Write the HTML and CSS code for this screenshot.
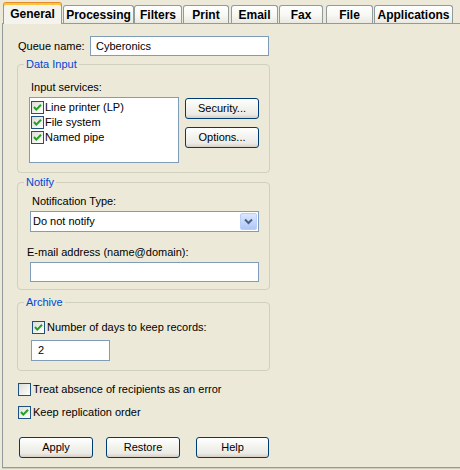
FILE: index.html
```html
<!DOCTYPE html>
<html>
<head>
<meta charset="utf-8">
<link rel="stylesheet" href="styles.css">
</head>
<body>
<div class="window">
  <div class="tabs">
    <div class="tab tab-general active">General</div>
    <div class="tab tab-processing">Processing</div>
    <div class="tab tab-filters">Filters</div>
    <div class="tab tab-print">Print</div>
    <div class="tab tab-email">Email</div>
    <div class="tab tab-fax">Fax</div>
    <div class="tab tab-file">File</div>
    <div class="tab tab-apps">Applications</div>
  </div>
  <div class="panel">
    <div class="queue-row">
      <span class="queue-label">Queue name:</span>
      <div class="textbox queue-input">Cyberonics</div>
    </div>

    <fieldset class="group group-data">
      <legend>Data Input</legend>
      <div class="body-data">
        <div class="caption services-caption">Input services:</div>
        <div class="services">
          <div class="listbox">
            <div class="item"><span class="cb"><svg viewBox="0 0 11 11" width="11" height="11"><polyline points="2,5 4.3,7.6 9,2.8" fill="none" stroke="#21a121" stroke-width="2"/></svg></span><span>Line printer (LP)</span></div>
            <div class="item"><span class="cb"><svg viewBox="0 0 11 11" width="11" height="11"><polyline points="2,5 4.3,7.6 9,2.8" fill="none" stroke="#21a121" stroke-width="2"/></svg></span><span>File system</span></div>
            <div class="item"><span class="cb"><svg viewBox="0 0 11 11" width="11" height="11"><polyline points="2,5 4.3,7.6 9,2.8" fill="none" stroke="#21a121" stroke-width="2"/></svg></span><span>Named pipe</span></div>
          </div>
          <div class="side-buttons">
            <div class="btn side-btn">Security...</div>
            <div class="btn side-btn">Options...</div>
          </div>
        </div>
      </div>
    </fieldset>

    <fieldset class="group group-notify">
      <legend>Notify</legend>
      <div class="body-notify">
        <div class="caption notify-caption">Notification Type:</div>
        <div class="combo">
          <span class="combo-text">Do not notify</span>
          <span class="combo-arrow"><svg viewBox="0 0 15 15" width="15" height="15"><polyline points="4,5.5 7.5,9 11,5.5" fill="none" stroke="#4d6185" stroke-width="2"/></svg></span>
        </div>
        <div class="caption email-caption">E-mail address (name@domain):</div>
        <div class="textbox email-input"></div>
      </div>
    </fieldset>

    <fieldset class="group group-archive">
      <legend>Archive</legend>
      <div class="body-archive">
        <div class="check-row">
          <span class="cb"><svg viewBox="0 0 11 11" width="11" height="11"><polyline points="2,5 4.3,7.6 9,2.8" fill="none" stroke="#21a121" stroke-width="2"/></svg></span>
          <span class="check-label">Number of days to keep records:</span>
        </div>
        <div class="textbox days-input">2</div>
      </div>
    </fieldset>

    <div class="check-row outer-check treat-row">
      <span class="cb"></span>
      <span class="check-label">Treat absence of recipients as an error</span>
    </div>
    <div class="check-row outer-check keep-row">
      <span class="cb"><svg viewBox="0 0 11 11" width="11" height="11"><polyline points="2,5 4.3,7.6 9,2.8" fill="none" stroke="#21a121" stroke-width="2"/></svg></span>
      <span class="check-label">Keep replication order</span>
    </div>

    <div class="actions">
      <div class="btn act-apply">Apply</div>
      <div class="btn act-restore">Restore</div>
      <div class="btn act-help">Help</div>
    </div>
  </div>
</div>
</body>
</html>
```

FILE: styles.css
```css
* { box-sizing: border-box; }

body {
  margin: 0;
  background: #ece9d8;
  font-family: "Liberation Sans", Arial, sans-serif;
  font-size: 11px;
  line-height: 13px;
  color: #000;
}

.window {
  width: 460px;
  height: 470px;
  overflow: hidden;
  background: #ece9d8;
}

/* ---------- tabs ---------- */
.tabs {
  display: flex;
  align-items: flex-end;
  height: 23px;
}

.tab {
  height: 18px;
  border: 1px solid #919b9c;
  border-bottom: none;
  border-radius: 3px 3px 0 0;
  background: linear-gradient(#ffffff, #f7f7f3 55%, #e9e8e0);
  font-size: 12px;
  font-weight: bold;
  display: flex;
  align-items: center;
  justify-content: center;
  padding-top: 1px;
}

.tab.active {
  height: 22px;
  margin-bottom: -1px;
  position: relative;
  z-index: 2;
  background: #f4f3ee;
  border-top: 1px solid #e68b2c;
  box-shadow: inset 0 2px 0 #ffc73c;
  padding-top: 2px;
}

.tab-general { margin-left: 3px; width: 59px; }
.tab-processing { margin-left: 1px; width: 71px; }
.tab-filters { margin-left: 0; width: 48px; }
.tab-print { margin-left: 1px; width: 46px; }
.tab-email { margin-left: 2px; width: 47px; }
.tab-fax { margin-left: 1px; width: 44px; }
.tab-file { margin-left: 3px; width: 47px; }
.tab-apps { margin-left: 1px; width: 79px; }

/* ---------- panel ---------- */
.panel {
  margin-left: 2px;
  height: 445px;
  border-top: 1px solid #919b9c;
  border-left: 1px solid #919b9c;
  border-bottom: 1px solid #919b9c;
  box-shadow: 0 1px 0 #d0d0bf;
  padding: 12px 0 0 14px;
  background: #ece9d8;
}

.queue-row {
  display: flex;
  align-items: center;
  height: 20px;
}

.queue-label {
  width: 73px;
  padding-left: 1px;
}

.textbox {
  background: #fff;
  border: 1px solid #7f9db9;
  display: flex;
  align-items: center;
}

.queue-input {
  width: 179px;
  height: 20px;
  padding-left: 5px;
}

/* ---------- group boxes ---------- */
.group {
  margin: 0;
  width: 253px;
  min-width: 0;
  border: 1px solid #d0d0bf;
  border-radius: 4px;
  padding: 0 6px;
}

.group legend {
  padding: 0 2px;
  color: #0046d5;
  line-height: 13px;
}

.caption { line-height: 13px; }

.group-data { margin-top: 2px; }
.body-data {
  margin-left: 5px;
  padding-top: 10px;
  padding-bottom: 9px;
}
.services-caption { margin-left: 2px; }

.services {
  display: flex;
  margin-top: 3px;
}

.listbox {
  width: 150px;
  height: 66px;
  background: #fff;
  border: 1px solid #7f9db9;
  padding: 2px 0 0 1px;
}

.item {
  display: flex;
  align-items: center;
  height: 15px;
  gap: 1px;
}

.cb {
  width: 13px;
  height: 13px;
  flex: none;
  border: 1px solid #1c5180;
  background: linear-gradient(135deg, #dcdcd7, #f5f5f2 70%, #ffffff);
  display: flex;
  align-items: center;
  justify-content: center;
}

.cb svg { display: block; }

.side-buttons {
  display: flex;
  flex-direction: column;
  margin-left: 6px;
  margin-top: 1px;
  gap: 8px;
}

.btn {
  height: 21px;
  border: 1px solid #003c74;
  border-radius: 3px;
  background: linear-gradient(#ffffff, #f4f4f0 40%, #ecebe6 80%, #d6d0c5);
  display: flex;
  align-items: center;
  justify-content: center;
}

.side-btn { width: 74px; }

/* notify */
.group-notify { margin-top: 3px; }
.body-notify {
  margin-left: 6px;
  padding-top: 6px;
  padding-bottom: 7px;
}
.notify-caption { margin-left: 2px; }

.combo {
  margin-top: 3px;
  width: 229px;
  height: 21px;
  background: #fff;
  border: 1px solid #7f9db9;
  display: flex;
  align-items: center;
  justify-content: space-between;
  padding: 1px;
}

.combo-text { padding-left: 1px; }

.combo-arrow {
  width: 17px;
  height: 17px;
  border: 1px solid #bad0f8;
  border-radius: 2px;
  background: linear-gradient(#dce7fd, #c3d4fb 60%, #b1c6f5);
  display: flex;
  align-items: center;
  justify-content: center;
}

.email-caption {
  margin-top: 14px;
  margin-left: -3px;
}

.email-input {
  margin-top: 3px;
  width: 229px;
  height: 20px;
}

/* archive */
.group-archive { margin-top: 6px; }
.body-archive {
  margin-left: 8px;
  padding-top: 12px;
  padding-bottom: 9px;
}

.check-row {
  display: flex;
  align-items: center;
  height: 13px;
  gap: 2px;
}

.days-input {
  margin-top: 6px;
  margin-left: -1px;
  width: 79px;
  height: 21px;
  padding-left: 6px;
}

/* outer checks */
.outer-check { margin-left: 1px; }
.treat-row { margin-top: 12px; }
.keep-row { margin-top: 10px; }

/* action buttons */
.actions {
  display: flex;
  margin-top: 18px;
  margin-left: 2px;
}

.act-apply { width: 74px; }
.act-restore { width: 74px; margin-left: 13px; }
.act-help { width: 73px; margin-left: 16px; }
```
